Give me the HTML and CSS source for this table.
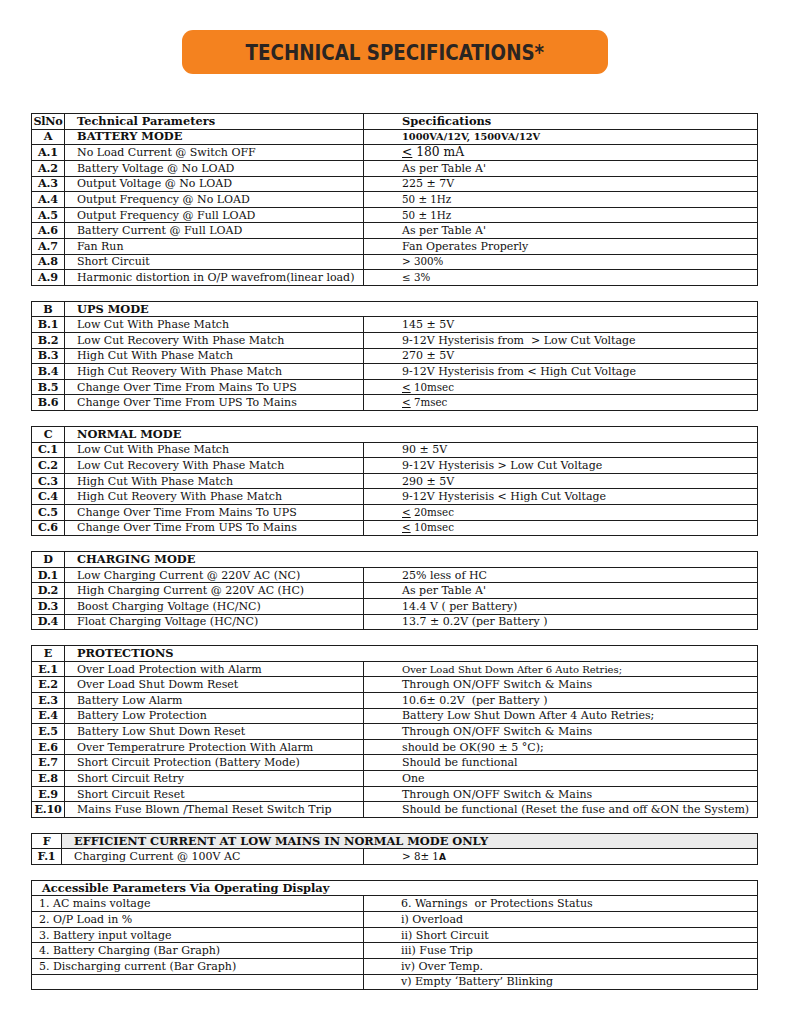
FILE: index.html
```html
<!DOCTYPE html>
<html>
<head>
<meta charset="utf-8">
<link rel="stylesheet" href="styles.css">
</head>
<body>
<div class="page">
  <div class="banner"><span class="banner-text">TECHNICAL SPECIFICATIONS*</span></div>

  <table class="spec">
    <colgroup><col class="c1"><col class="c2"><col class="c3"></colgroup>
    <tr class="head"><td class="no">SlNo</td><td class="par b">Technical Parameters</td><td class="val b">Specifications</td></tr>
    <tr><td class="no">A</td><td class="par b">BATTERY MODE</td><td class="val b small">1000VA/12V, 1500VA/12V</td></tr>
    <tr><td class="no">A.1</td><td class="par">No Load Current @ Switch OFF</td><td class="val big"><u>&lt;</u> 180 mA</td></tr>
    <tr><td class="no">A.2</td><td class="par">Battery Voltage @ No LOAD</td><td class="val">As per Table A'</td></tr>
    <tr><td class="no">A.3</td><td class="par">Output Voltage @ No LOAD</td><td class="val">225 ± 7V</td></tr>
    <tr><td class="no">A.4</td><td class="par">Output Frequency @ No LOAD</td><td class="val sm">50 ± 1Hz</td></tr>
    <tr><td class="no">A.5</td><td class="par">Output Frequency @ Full LOAD</td><td class="val sm">50 ± 1Hz</td></tr>
    <tr><td class="no">A.6</td><td class="par">Battery Current @ Full LOAD</td><td class="val">As per Table A'</td></tr>
    <tr><td class="no">A.7</td><td class="par">Fan Run</td><td class="val">Fan Operates Properly</td></tr>
    <tr><td class="no">A.8</td><td class="par">Short Circuit</td><td class="val sm">&gt; 300%</td></tr>
    <tr><td class="no">A.9</td><td class="par">Harmonic distortion in O/P wavefrom(linear load)</td><td class="val sm">≤ 3%</td></tr>
  </table>

  <table class="spec">
    <colgroup><col class="c1"><col class="c2"><col class="c3"></colgroup>
    <tr><td class="no">B</td><td class="par b" colspan="2">UPS MODE</td></tr>
    <tr><td class="no">B.1</td><td class="par">Low Cut With Phase Match</td><td class="val">145 ± 5V</td></tr>
    <tr><td class="no">B.2</td><td class="par">Low Cut Recovery With Phase Match</td><td class="val">9-12V Hysterisis from &nbsp;&gt; Low Cut Voltage</td></tr>
    <tr><td class="no">B.3</td><td class="par">High Cut With Phase Match</td><td class="val">270 ± 5V</td></tr>
    <tr><td class="no">B.4</td><td class="par">High Cut Reovery With Phase Match</td><td class="val">9-12V Hysterisis from &lt; High Cut Voltage</td></tr>
    <tr><td class="no">B.5</td><td class="par">Change Over Time From Mains To UPS</td><td class="val sm"><u>&lt;</u> 10msec</td></tr>
    <tr><td class="no">B.6</td><td class="par">Change Over Time From UPS To Mains</td><td class="val sm"><u>&lt;</u> 7msec</td></tr>
  </table>

  <table class="spec">
    <colgroup><col class="c1"><col class="c2"><col class="c3"></colgroup>
    <tr><td class="no">C</td><td class="par b" colspan="2">NORMAL MODE</td></tr>
    <tr><td class="no">C.1</td><td class="par">Low Cut With Phase Match</td><td class="val">90 ± 5V</td></tr>
    <tr><td class="no">C.2</td><td class="par">Low Cut Recovery With Phase Match</td><td class="val">9-12V Hysterisis &gt; Low Cut Voltage</td></tr>
    <tr><td class="no">C.3</td><td class="par">High Cut With Phase Match</td><td class="val">290 ± 5V</td></tr>
    <tr><td class="no">C.4</td><td class="par">High Cut Reovery With Phase Match</td><td class="val">9-12V Hysterisis &lt; High Cut Voltage</td></tr>
    <tr><td class="no">C.5</td><td class="par">Change Over Time From Mains To UPS</td><td class="val sm"><u>&lt;</u> 20msec</td></tr>
    <tr><td class="no">C.6</td><td class="par">Change Over Time From UPS To Mains</td><td class="val sm"><u>&lt;</u> 10msec</td></tr>
  </table>

  <table class="spec">
    <colgroup><col class="c1"><col class="c2"><col class="c3"></colgroup>
    <tr><td class="no">D</td><td class="par b" colspan="2">CHARGING MODE</td></tr>
    <tr><td class="no">D.1</td><td class="par">Low Charging Current @ 220V AC (NC)</td><td class="val">25% less of HC</td></tr>
    <tr><td class="no">D.2</td><td class="par">High Charging Current @ 220V AC (HC)</td><td class="val">As per Table A'</td></tr>
    <tr><td class="no">D.3</td><td class="par">Boost Charging Voltage (HC/NC)</td><td class="val">14.4 V ( per Battery)</td></tr>
    <tr><td class="no">D.4</td><td class="par">Float Charging Voltage (HC/NC)</td><td class="val">13.7 ± 0.2V (per Battery )</td></tr>
  </table>

  <table class="spec">
    <colgroup><col class="c1"><col class="c2"><col class="c3"></colgroup>
    <tr><td class="no">E</td><td class="par b" colspan="2">PROTECTIONS</td></tr>
    <tr><td class="no">E.1</td><td class="par">Over Load Protection with Alarm</td><td class="val xs">Over Load Shut Down After 6 Auto Retries;</td></tr>
    <tr><td class="no">E.2</td><td class="par">Over Load Shut Dowm Reset</td><td class="val">Through ON/OFF Switch &amp; Mains</td></tr>
    <tr><td class="no">E.3</td><td class="par">Battery Low Alarm</td><td class="val">10.6± 0.2V &nbsp;(per Battery )</td></tr>
    <tr><td class="no">E.4</td><td class="par">Battery Low Protection</td><td class="val">Battery Low Shut Down After 4 Auto Retries;</td></tr>
    <tr><td class="no">E.5</td><td class="par">Battery Low Shut Down Reset</td><td class="val">Through ON/OFF Switch &amp; Mains</td></tr>
    <tr><td class="no">E.6</td><td class="par">Over Temperatrure Protection With Alarm</td><td class="val">should be OK(90 ± 5 °C);</td></tr>
    <tr><td class="no">E.7</td><td class="par">Short Circuit Protection (Battery Mode)</td><td class="val">Should be functional</td></tr>
    <tr><td class="no">E.8</td><td class="par">Short Circuit Retry</td><td class="val">One</td></tr>
    <tr><td class="no">E.9</td><td class="par">Short Circuit Reset</td><td class="val">Through ON/OFF Switch &amp; Mains</td></tr>
    <tr><td class="no">E.10</td><td class="par">Mains Fuse Blown /Themal Reset Switch Trip</td><td class="val">Should be functional (Reset the fuse and off &amp;ON the System)</td></tr>
  </table>

  <table class="spec">
    <colgroup><col class="c1f"><col class="c2f"><col class="c3"></colgroup>
    <tr><td class="no">F</td><td class="par b shade" colspan="2">EFFICIENT CURRENT AT LOW MAINS IN NORMAL MODE ONLY</td></tr>
    <tr><td class="no">F.1</td><td class="par">Charging Current @ 100V AC</td><td class="val sm">&gt; 8± 1<span class="amp">A</span></td></tr>
  </table>

  <table class="spec disp">
    <colgroup><col class="d1"><col class="c3"></colgroup>
    <tr><td class="dh b" colspan="2">Accessible Parameters Via Operating Display</td></tr>
    <tr><td class="dl">1. AC mains voltage</td><td class="dr">6. Warnings &nbsp;or Protections Status</td></tr>
    <tr><td class="dl">2. O/P Load in %</td><td class="dr">i) Overload</td></tr>
    <tr><td class="dl">3. Battery input voltage</td><td class="dr">ii) Short Circuit</td></tr>
    <tr><td class="dl">4. Battery Charging (Bar Graph)</td><td class="dr">iii) Fuse Trip</td></tr>
    <tr><td class="dl">5. Discharging current (Bar Graph)</td><td class="dr">iv) Over Temp.</td></tr>
    <tr><td class="dl"></td><td class="dr">v) Empty ‘Battery’ Blinking</td></tr>
  </table>
</div>
</body>
</html>
```

FILE: styles.css
```css
html, body {
  margin: 0;
  padding: 0;
  background: #ffffff;
}

.page {
  width: 727px;
  margin-left: 31px;
  padding-top: 30px;
  font-family: "DejaVu Serif", "Liberation Serif", serif;
  color: #111;
}

.banner {
  width: 426px;
  height: 44px;
  margin-left: 151px;
  margin-bottom: 39px;
  background: #f4821f;
  border-radius: 11px;
  display: flex;
  align-items: center;
  justify-content: center;
}

.banner-text {
  display: inline-block;
  font-family: "DejaVu Sans", sans-serif;
  font-weight: bold;
  font-size: 22px;
  color: #2a2522;
  transform: scaleX(0.83);
}

.spec {
  width: 727px;
  border-collapse: collapse;
  table-layout: fixed;
  margin-bottom: 14.84px;
  font-size: 11px;
}

.spec col.c1 { width: 33px; }
.spec col.c2 { width: 299px; }
.spec col.c1f { width: 30px; }
.spec col.c2f { width: 302px; }
.spec col.d1 { width: 332px; }

.spec td {
  border: 1px solid #1d1d1d;
  padding: 0;
  height: 14.64px;
  line-height: 13px;
  white-space: nowrap;
  overflow: hidden;
  vertical-align: middle;
}

.spec .no {
  text-align: center;
  font-weight: bold;
  font-size: 11.2px;
  letter-spacing: -0.2px;
}

.spec .par { padding-left: 12px; }
.spec .val { padding-left: 38px; }
.spec .b { font-weight: bold; font-size: 11.4px; }
.spec .small { font-size: 9.8px; }
.spec .big { font-size: 12.3px; }
.spec .sm { font-size: 10.3px; }
.spec .xs { font-size: 10px; }
.spec .shade { background: #ececec; }
.spec .amp { font-family: "DejaVu Sans", sans-serif; font-weight: bold; font-size: 9px; }

.disp .dh { padding-left: 10px; }
.disp .dl { padding-left: 7px; }
.disp .dr { padding-left: 37px; }
```
